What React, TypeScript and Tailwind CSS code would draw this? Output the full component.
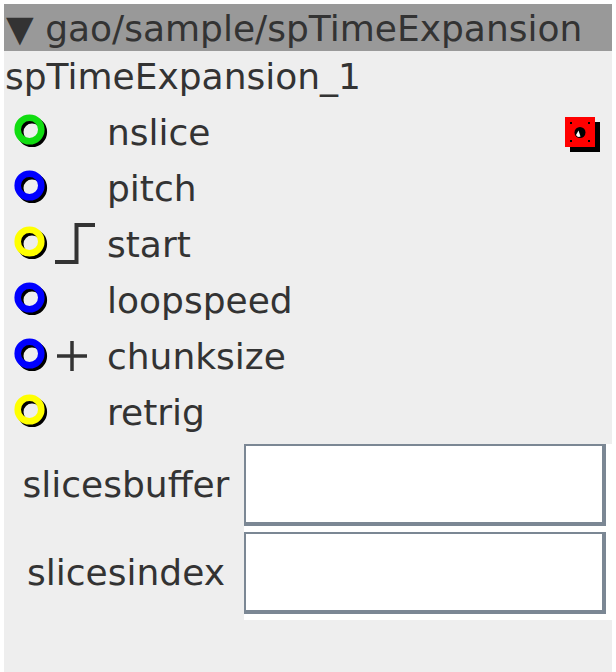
import React from "react";

const Ring = ({ color }: { color: string }) => (
  <svg width="38" height="38" viewBox="0 0 38 38" className="block">
    <circle cx="18" cy="18" r="11.8" fill="none" stroke="#000" strokeWidth="6.6" />
    <circle cx="15.5" cy="15.5" r="11.8" fill="none" stroke={color} strokeWidth="6.6" />
  </svg>
);

const Step = () => (
  <svg width="50" height="56" viewBox="0 0 50 56" className="block">
    <path d="M5 46 H26.5 V9 H45" fill="none" stroke="#333" strokeWidth="4" strokeLinecap="butt" strokeLinejoin="miter" />
  </svg>
);

const Plus = () => (
  <svg width="50" height="56" viewBox="0 0 50 56" className="block">
    <path d="M7 28 H37 M22 13 V43" fill="none" stroke="#333" strokeWidth="3.5" />
  </svg>
);

const RedBox = () => (
  <svg width="36" height="36" viewBox="0 0 36 36" className="block">
    <rect x="5" y="5" width="30" height="30" fill="#000" />
    <rect x="0" y="0" width="30" height="30" fill="#ff0000" />
    <rect x="5" y="5" width="2" height="2" fill="#000" />
    <rect x="23" y="5" width="2" height="2" fill="#000" />
    <rect x="5" y="23" width="2" height="2" fill="#000" />
    <rect x="23" y="23" width="2" height="2" fill="#000" />
    <circle cx="15" cy="15.5" r="5.5" fill="#000" />
    <path d="M11 18 A3.5 3.5 0 0 0 15.5 19.5 L13.5 13.5 Z" fill="#fff" />
  </svg>
);

type Row = { color: string; mid?: "step" | "plus"; label: string; red?: boolean };

const rows: Row[] = [
  { color: "#11dd11", label: "nslice", red: true },
  { color: "#0000ff", label: "pitch" },
  { color: "#ffff00", mid: "step", label: "start" },
  { color: "#0000ff", label: "loopspeed" },
  { color: "#0000ff", mid: "plus", label: "chunksize" },
  { color: "#ffff00", label: "retrig" },
];

const InputRow = ({ label }: { label: string }) => (
  <div className="flex h-[88px]">
    <div className="ml-1 w-[236px] h-[82px] flex items-center justify-center leading-[42px]">{label}</div>
    <div className="flex-1 border-r-[6px] border-b-[6px] border-white border-solid">
      <div className="h-[82px] bg-white border-solid border-[#7b8794] border-t-2 border-l-2 border-r-4 border-b-4" />
    </div>
  </div>
);

export default function App() {
  return (
    <div
      className="bg-white pt-1 px-1 w-[616px] h-[672px] overflow-hidden text-[#333333] text-[36px]"
      style={{ fontFamily: '"DejaVu Sans", sans-serif' }}
    >
      <div className="bg-[#eeeeee] h-[668px] flex flex-col">
        <div className="bg-[#999999] h-[47px] pt-1 pl-[2px] leading-[42px] whitespace-nowrap">▼ gao/sample/spTimeExpansion</div>
        <div className="h-[53px] pt-[5px] pl-[1px] leading-[42px] whitespace-nowrap">spTimeExpansion_1</div>
        <div className="flex flex-col">
          {rows.map((r) => (
            <div key={r.label} className="flex h-[56px] items-center">
              <div className="w-[46px] pl-[10px] pt-[2px]">
                <Ring color={r.color} />
              </div>
              <div className="w-[57px] h-[56px] flex items-center">
                {r.mid === "step" && <Step />}
                {r.mid === "plus" && <Plus />}
              </div>
              <div className="leading-[56px] pt-[2px]">{r.label}</div>
              {r.red && (
                <div className="ml-auto mr-[11px] self-start mt-[13px]">
                  <RedBox />
                </div>
              )}
            </div>
          ))}
        </div>
        <div className="mt-1">
          <InputRow label="slicesbuffer" />
          <InputRow label="slicesindex" />
        </div>
      </div>
    </div>
  );
}
